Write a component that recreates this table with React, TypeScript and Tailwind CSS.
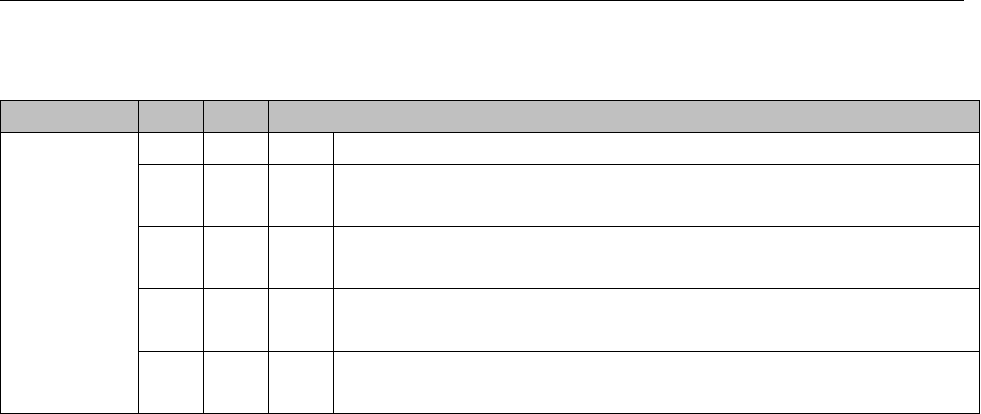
export default function App() {
  return (
    <div className="w-[981px] h-[414px] bg-white overflow-hidden" style={{ fontFamily: '"Liberation Sans", Arial, sans-serif' }}>
      <div className="w-[964px] h-px bg-black" />
      <div className="mt-[99px] w-[980px] grid grid-cols-[137px_64px_64px_64px_1fr] grid-rows-[31px_31px_61px_61px_62px_61px] gap-px p-px bg-black">
        <div className="bg-[#c0c0c0]" />
        <div className="bg-[#c0c0c0]" />
        <div className="bg-[#c0c0c0]" />
        <div className="bg-[#c0c0c0] col-span-2" />
        <div className="bg-white row-span-5" />
        <div className="bg-white" />
        <div className="bg-white" />
        <div className="bg-white" />
        <div className="bg-white" />
        <div className="bg-white" />
        <div className="bg-white" />
        <div className="bg-white" />
        <div className="bg-white" />
        <div className="bg-white" />
        <div className="bg-white" />
        <div className="bg-white" />
        <div className="bg-white" />
        <div className="bg-white" />
        <div className="bg-white" />
        <div className="bg-white" />
        <div className="bg-white" />
        <div className="bg-white" />
        <div className="bg-white" />
        <div className="bg-white" />
        <div className="bg-white" />
      </div>
    </div>
  );
}
